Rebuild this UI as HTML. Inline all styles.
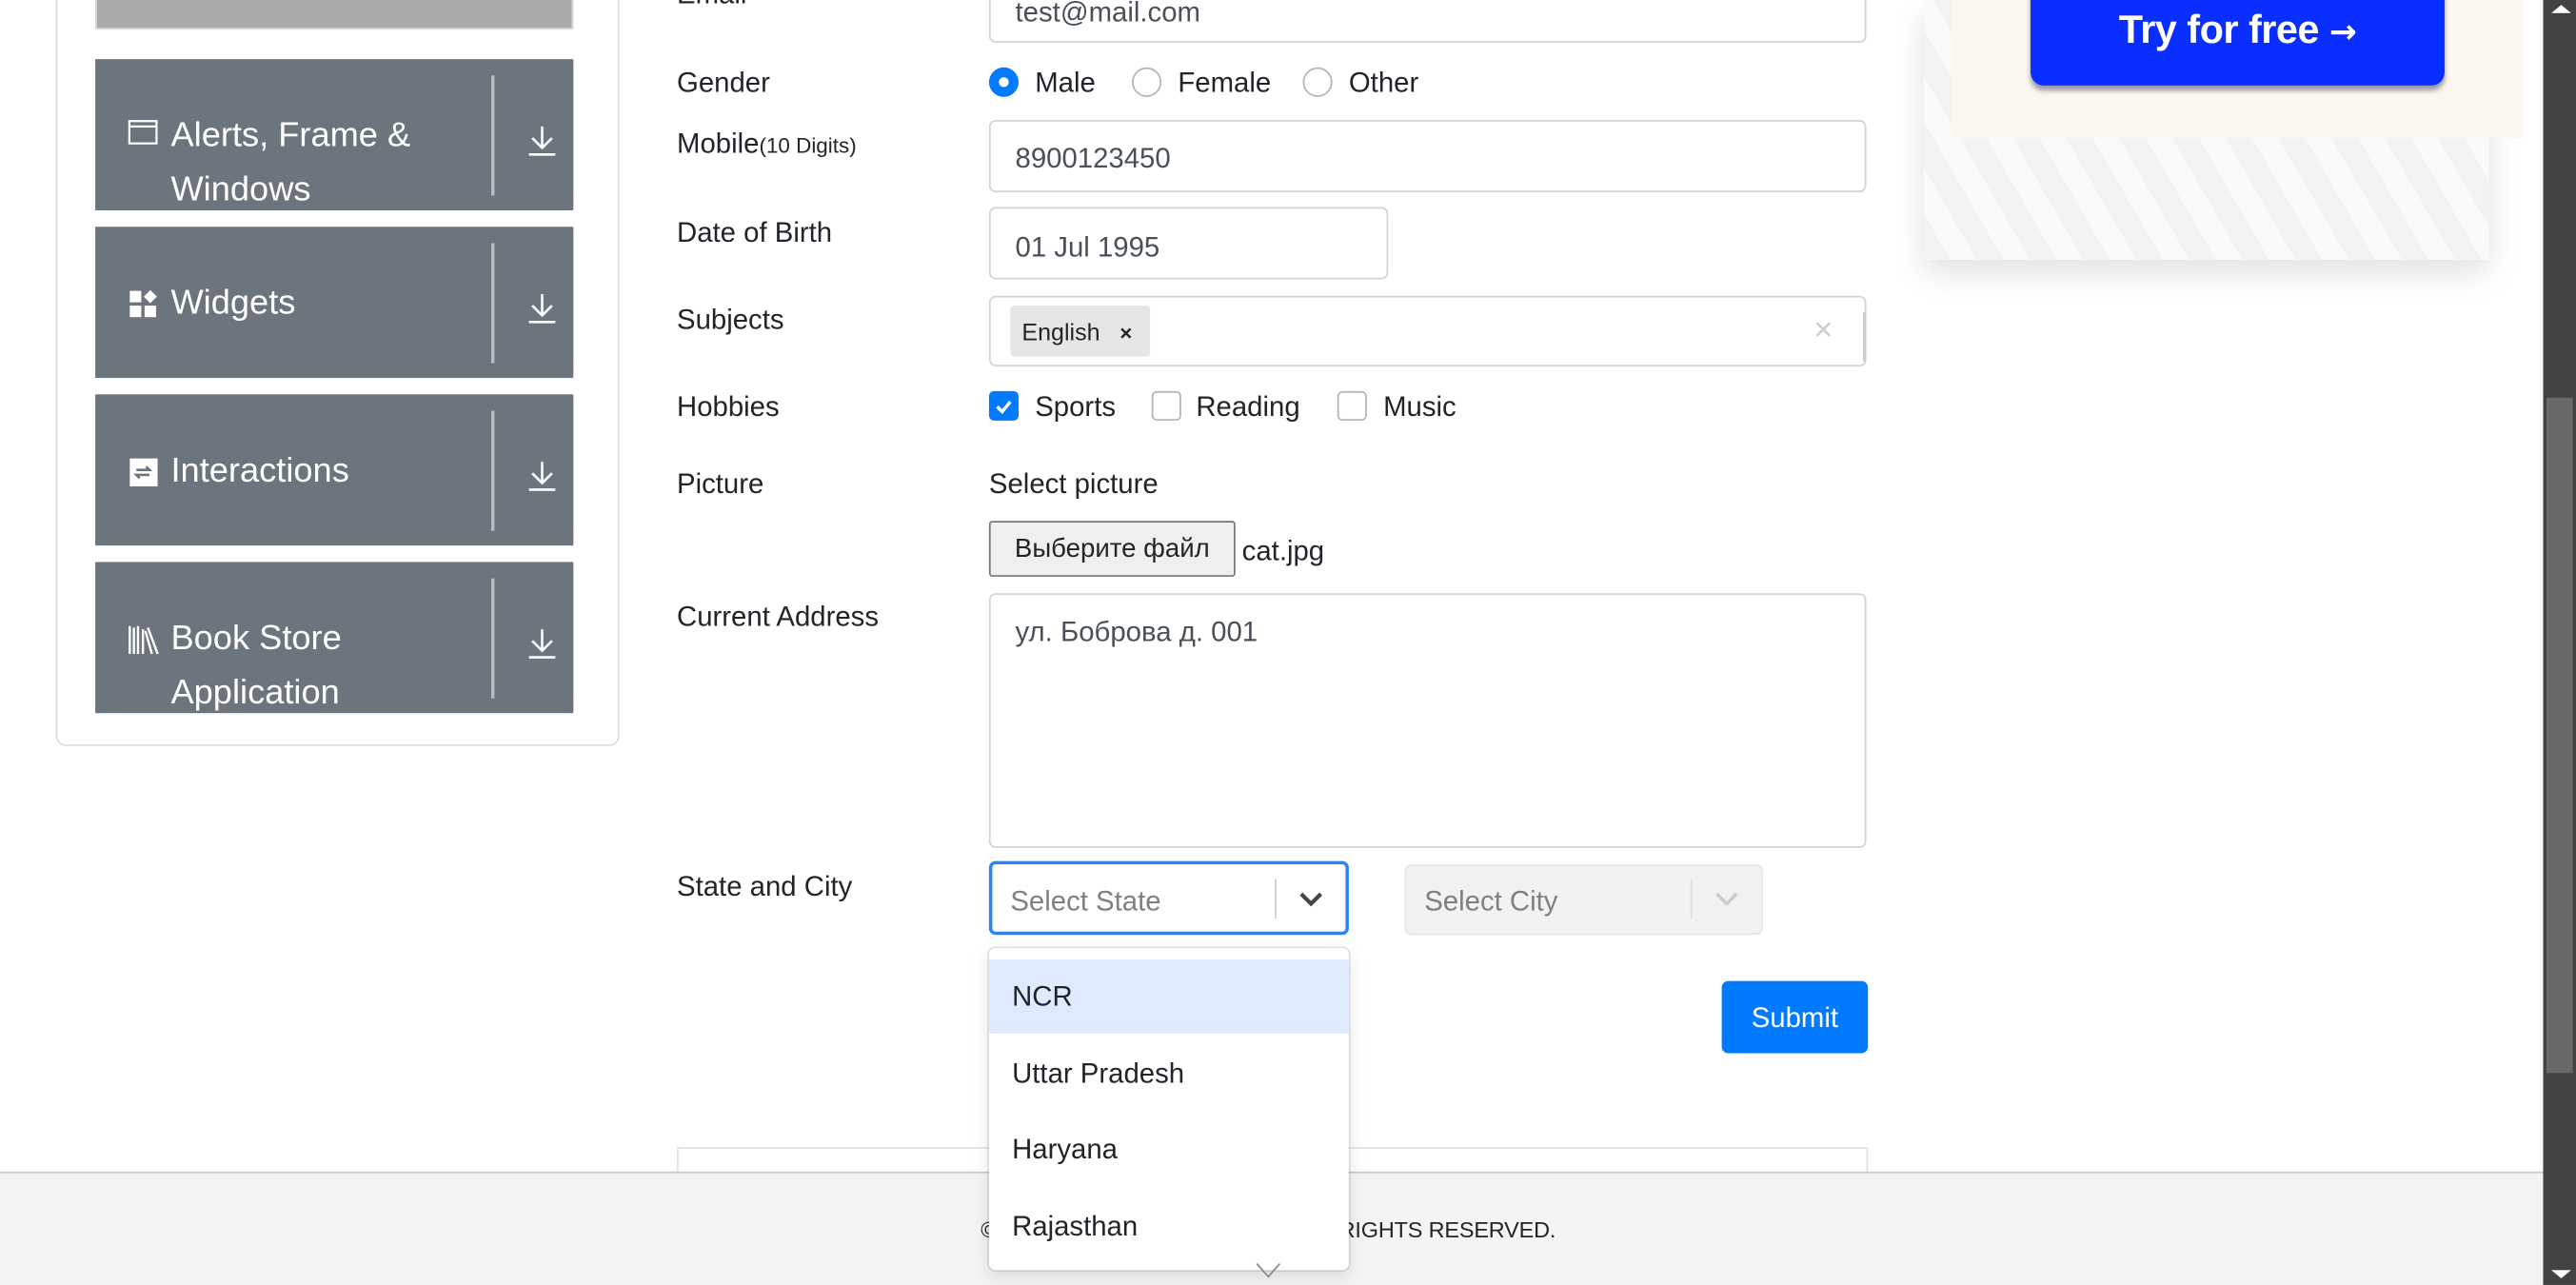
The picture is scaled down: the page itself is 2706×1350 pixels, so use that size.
<!DOCTYPE html>
<html><head><meta charset="utf-8">
<style>
*{box-sizing:border-box;margin:0;padding:0}
html,body{width:2706px;height:1350px;overflow:hidden;background:#fff}
#s{position:absolute;left:0;top:0;width:1568px;height:782px;transform:scale(1.72577,1.7263);transform-origin:0 0;font-family:"Liberation Sans",sans-serif;color:#212529;font-size:17px}
.a{position:absolute}
.item{position:absolute;left:58px;width:291px;height:92px;background:#6c757d;color:#fff;font-size:21px}
.item .t{position:absolute;left:46px;line-height:33px}
.item .dv{position:absolute;left:241px;top:10px;width:2px;height:73px;background:#b8bcc0}
.item svg.dl{position:absolute;left:262px;top:40px}
.inp{position:absolute;border:1px solid #ced4da;border-radius:4px;background:#fff;color:#495057;padding-left:15px}
.lbl{position:absolute;left:412px}
</style></head><body><div id="s">
<!-- sidebar -->
<div class="a" style="left:34px;top:-20px;width:343px;height:474px;border:1px solid #ddd;border-radius:6px"></div>
<div class="a" style="left:58px;top:0;width:291px;height:18px;background:#aaa;border:1px solid #d8dce0;border-top:none"></div>

<div class="item" style="top:36px">
<svg class="a" style="left:20px;top:37px" width="18" height="15" viewBox="0 0 18 15" fill="none" stroke="#fff" stroke-width="1.3"><rect x="0.7" y="0.7" width="16.6" height="13.6"/><line x1="0.7" y1="4" x2="17.3" y2="4"/></svg>
<div class="t" style="top:30px">Alerts, Frame &amp;<br>Windows</div>
<div class="dv"></div>
<svg class="dl" width="20" height="20" viewBox="0 0 20 20" fill="none" stroke="#fff" stroke-width="1.5"><path d="M10 1v12M4 8l6 6 6-6M2 18h16"/></svg>
</div>
<div class="item" style="top:138px">
<svg class="a" style="left:20px;top:38px" width="18" height="18" viewBox="0 0 18 18" fill="#fff"><rect x="1" y="1" width="7" height="7"/><rect x="1" y="10" width="7" height="7"/><rect x="10" y="10" width="7" height="7"/><path d="M13.5 0.5l4 4-4 4-4-4z"/></svg>
<div class="t" style="top:30px">Widgets</div>
<div class="dv"></div>
<svg class="dl" width="20" height="20" viewBox="0 0 20 20" fill="none" stroke="#fff" stroke-width="1.5"><path d="M10 1v12M4 8l6 6 6-6M2 18h16"/></svg>
</div>
<div class="item" style="top:240px">
<svg class="a" style="left:20px;top:38px" width="18" height="18" viewBox="0 0 18 18"><rect x="1" y="1" width="17" height="17" fill="#fff"/><path d="M5 8h8l-2-2M13 11H5l2 2" stroke="#6c757d" stroke-width="1.5" fill="none"/></svg>
<div class="t" style="top:30px">Interactions</div>
<div class="dv"></div>
<svg class="dl" width="20" height="20" viewBox="0 0 20 20" fill="none" stroke="#fff" stroke-width="1.5"><path d="M10 1v12M4 8l6 6 6-6M2 18h16"/></svg>
</div>
<div class="item" style="top:342px;height:92px">
<svg class="a" style="left:20px;top:38px" width="20" height="18" viewBox="0 0 20 18" fill="none" stroke="#fff" stroke-width="1.4"><path d="M1 1v17M3.5 2v16M6 1v17M9 3v15M12 2l6 16M10.5 4l4 14"/></svg>
<div class="t" style="top:30px">Book Store<br>Application</div>
<div class="dv"></div>
<svg class="dl" width="20" height="20" viewBox="0 0 20 20" fill="none" stroke="#fff" stroke-width="1.5"><path d="M10 1v12M4 8l6 6 6-6M2 18h16"/></svg>
</div>

<!-- form -->
<div class="lbl" style="top:-13px">Email</div>
<div class="inp" style="left:602px;top:-18px;width:534px;height:44px;line-height:49px">test@mail.com</div>

<div class="lbl" style="top:41px">Gender</div>
<div class="a" style="left:602px;top:41px;width:18px;height:18px;border-radius:50%;background:#007bff"><div class="a" style="left:6px;top:6px;width:6px;height:6px;border-radius:50%;background:#fff"></div></div>
<div class="a" style="left:630px;top:41px">Male</div>
<div class="a" style="left:689px;top:41px;width:18px;height:18px;border-radius:50%;border:1px solid #adb5bd"></div>
<div class="a" style="left:717px;top:41px">Female</div>
<div class="a" style="left:793px;top:41px;width:18px;height:18px;border-radius:50%;border:1px solid #adb5bd"></div>
<div class="a" style="left:821px;top:41px">Other</div>

<div class="lbl" style="top:78px">Mobile<span style="font-size:13px">(10 Digits)</span></div>
<div class="inp" style="left:602px;top:73px;width:534px;height:44px;line-height:46px">8900123450</div>

<div class="lbl" style="top:132px">Date of Birth</div>
<div class="inp" style="left:602px;top:126px;width:243px;height:44px;line-height:47px">01 Jul 1995</div>

<div class="lbl" style="top:185px">Subjects</div>
<div class="inp" style="left:602px;top:180px;width:534px;height:43px;padding:0"></div>
<div class="a" style="left:1134px;top:190px;width:2px;height:30px;background:#ccc"></div>
<div class="a" style="left:615px;top:186px;width:85px;height:31px;background:#e6e6e6;border-radius:2px;font-size:14.5px;line-height:33px;padding-left:7px">English <span style="margin-left:8px;font-weight:bold;font-size:13px">×</span></div>
<div class="a" style="left:1104px;top:190px;color:#ccc;font-size:20px">×</div>

<div class="lbl" style="top:238px">Hobbies</div>
<div class="a" style="left:602px;top:238px;width:18px;height:18px;border-radius:3px;background:#007bff"><svg class="a" style="left:3px;top:3px" width="12" height="12" viewBox="0 0 12 12" fill="none" stroke="#fff" stroke-width="2"><path d="M2 6.5l3 3 5-6"/></svg></div>
<div class="a" style="left:630px;top:238px">Sports</div>
<div class="a" style="left:701px;top:238px;width:18px;height:18px;border-radius:3px;border:1px solid #adb5bd"></div>
<div class="a" style="left:728px;top:238px">Reading</div>
<div class="a" style="left:814px;top:238px;width:18px;height:18px;border-radius:3px;border:1px solid #adb5bd"></div>
<div class="a" style="left:842px;top:238px">Music</div>

<div class="lbl" style="top:285px">Picture</div>
<div class="a" style="left:602px;top:285px">Select picture</div>
<div class="a" style="left:602px;top:317px;width:150px;height:34px;background:#efefef;border:1px solid #767676;border-radius:2px;font-size:16px;line-height:34px;text-align:center">Выберите файл</div>
<div class="a" style="left:756px;top:326px">cat.jpg</div>

<div class="lbl" style="top:366px">Current Address</div>
<div class="inp" style="left:602px;top:361px;width:534px;height:155px;padding-top:13px">ул. Боброва д. 001</div>

<div class="lbl" style="top:530px">State and City</div>
<div class="a" style="left:602px;top:524px;width:219px;height:45px;border:2px solid #2684ff;border-radius:4px;background:#fff"></div>
<div class="a" style="left:615px;top:539px;color:#808080">Select State</div>
<div class="a" style="left:776px;top:535px;width:1px;height:24px;background:#ccc"></div>
<svg class="a" style="left:790px;top:541px" width="16" height="12" viewBox="0 0 16 12" fill="none" stroke="#444" stroke-width="2.4"><path d="M2 3l6 6 6-6"/></svg>
<div class="a" style="left:855px;top:526px;width:218px;height:43px;border:1px solid #e6e6e6;border-radius:4px;background:#f2f2f2"></div>
<div class="a" style="left:867px;top:539px;color:#808080">Select City</div>
<div class="a" style="left:1029px;top:535px;width:1px;height:24px;background:#ddd"></div>
<svg class="a" style="left:1043px;top:541px" width="16" height="12" viewBox="0 0 16 12" fill="none" stroke="#ccc" stroke-width="2"><path d="M2 3l6 6 6-6"/></svg>

<div class="a" style="left:1048px;top:597px;width:89px;height:44px;background:#007bff;border-radius:4px;color:#fff;text-align:center;line-height:45px">Submit</div>
<div class="a" style="left:412px;top:698px;width:725px;height:30px;border:1px solid #e2e2e2"></div>

<!-- footer -->
<div class="a" style="left:0;top:713px;width:1548px;height:69px;background:#f4f4f4;border-top:1px solid #c8c8c8"></div>
<div class="a" style="left:597px;top:741px;font-size:13.6px;letter-spacing:-0.1px">© 2013-2020 TOOLSQA.COM | ALL RIGHTS RESERVED.</div>

<!-- dropdown -->
<div class="a" style="left:602px;top:577px;width:219px;height:196px;background:#fff;border-radius:4px;box-shadow:0 0 0 1px rgba(0,0,0,.1),0 4px 11px rgba(0,0,0,.1)"></div>
<div class="a" style="left:602px;top:584px;width:219px;height:45px;background:#deebff"></div>
<div class="a" style="left:616px;top:597px">NCR</div>
<div class="a" style="left:616px;top:644px">Uttar Pradesh</div>
<div class="a" style="left:616px;top:690px">Haryana</div>
<div class="a" style="left:616px;top:737px">Rajasthan</div>
<svg class="a" style="left:763px;top:767px" width="18" height="12" viewBox="0 0 18 12" fill="none" stroke="#888" stroke-width="1"><path d="M2 2l7 8 7-8"/></svg>

<!-- ad -->
<div class="a" style="left:1171px;top:0;width:344px;height:158px;background:repeating-linear-gradient(60deg,#f3f3f3 0 14px,#fafafa 14px 28px);box-shadow:0 8px 18px rgba(0,0,0,.12)"></div>
<div class="a" style="left:1188px;top:0;width:348px;height:84px;background:#fcf7f1"></div>
<div class="a" style="left:1236px;top:-20px;width:252px;height:72px;background:#0a2eff;border-radius:8px;box-shadow:0 3px 3px rgba(0,0,50,.4);color:#fff;font-weight:bold;font-size:24px;text-align:center;padding-top:25px;letter-spacing:-0.3px">Try for free <span style="font-family:'DejaVu Sans',sans-serif;font-size:20px">→</span></div>

<!-- scrollbar -->
<div class="a" style="left:1548px;top:0;width:20px;height:782px;background:#424242"></div>
<div class="a" style="left:1550px;top:242px;width:16px;height:411px;background:#686868"></div>
<div class="a" style="left:1553px;top:3px;width:0;height:0;border-left:6px solid transparent;border-right:6px solid transparent;border-bottom:5px solid #fff"></div>
<div class="a" style="left:1553px;top:773px;width:0;height:0;border-left:6px solid transparent;border-right:6px solid transparent;border-top:5px solid #fff"></div>
</div></body></html>
